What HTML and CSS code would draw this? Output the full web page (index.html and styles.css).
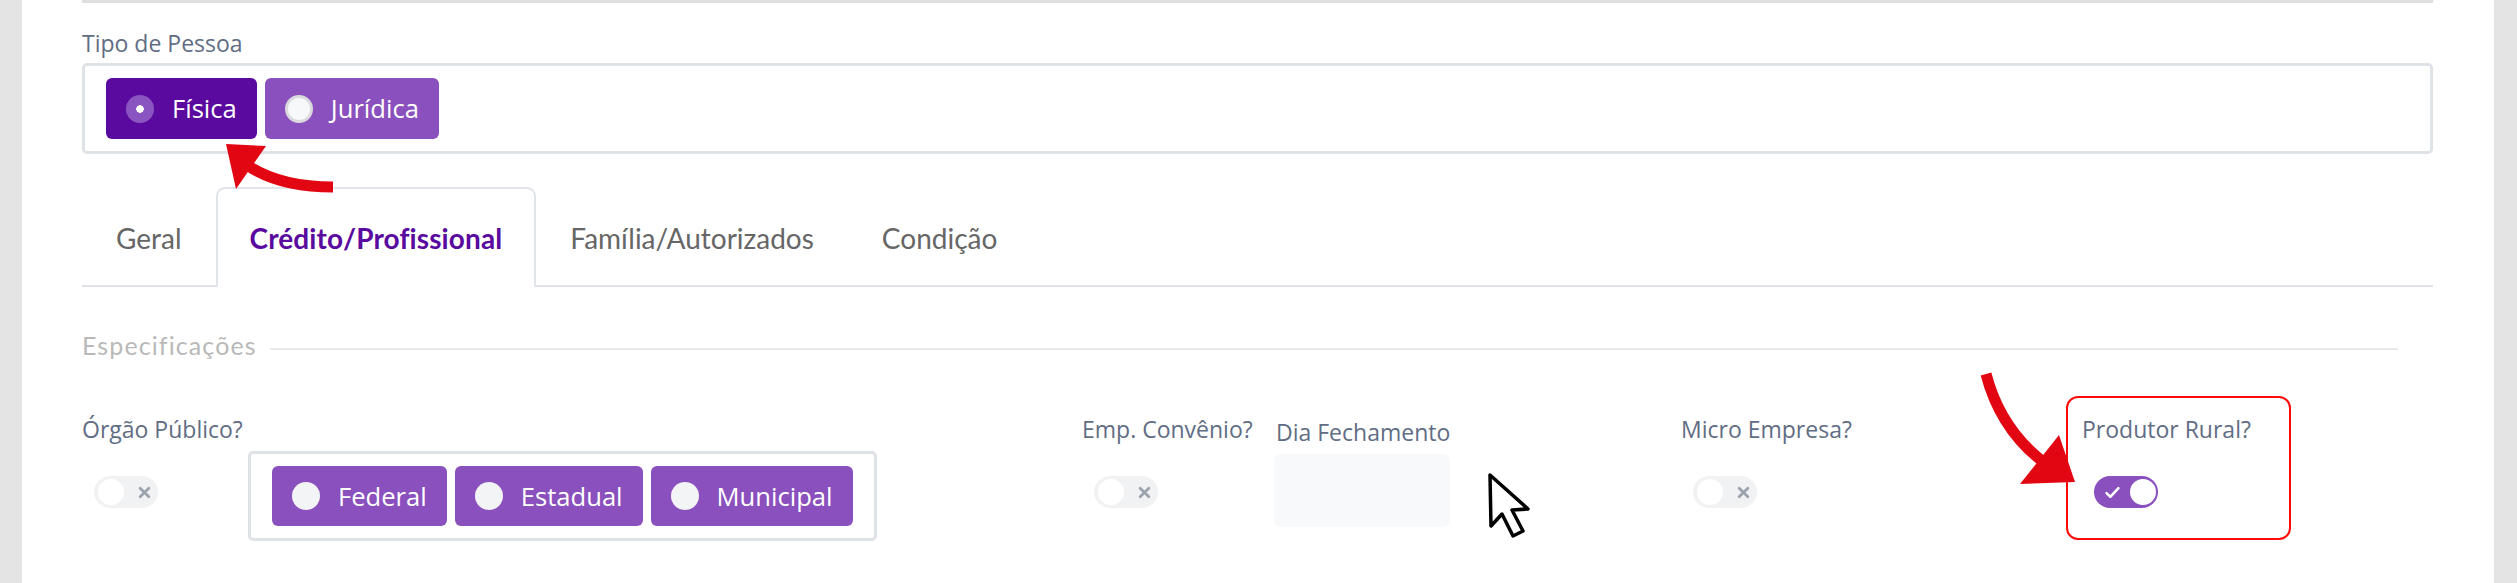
FILE: index.html
```html
<!DOCTYPE html>
<html lang="pt-BR">
<head>
<meta charset="utf-8">
<title>Cadastro de Cliente</title>
<link rel="stylesheet" href="styles.css">
</head>
<body>
<div class="page">
  <div class="topline"></div>

  <section class="pessoa">
    <div class="label">Tipo de Pessoa</div>
    <div class="radio-group">
      <span class="rbtn dark"><span class="dot checked"></span>Física</span>
      <span class="rbtn"><span class="dot ring"></span>Jurídica</span>
    </div>
  </section>

  <nav class="tabs">
    <span class="tab">Geral</span>
    <span class="tab active">Crédito/Profissional</span>
    <span class="tab">Família/Autorizados</span>
    <span class="tab">Condição</span>
  </nav>

  <div class="legend"><span class="legend-text">Especificações</span><span class="legend-line"></span></div>

  <div class="fields">
    <div class="field f-orgao">
      <div class="label">Órgão Público?</div>
      <div class="orgao-row">
        <span class="toggle off">
          <span class="knob"></span>
          <svg class="xicon" viewBox="0 0 12 12"><path d="M2 2 L10 10 M10 2 L2 10"/></svg>
        </span>
        <div class="radio-group inline">
          <span class="rbtn"><span class="dot"></span>Federal</span>
          <span class="rbtn"><span class="dot"></span>Estadual</span>
          <span class="rbtn"><span class="dot"></span>Municipal</span>
        </div>
      </div>
    </div>

    <div class="field f-emp">
      <div class="label">Emp. Convênio?</div>
      <span class="toggle off">
        <span class="knob"></span>
        <svg class="xicon" viewBox="0 0 12 12"><path d="M2 2 L10 10 M10 2 L2 10"/></svg>
      </span>
    </div>

    <div class="field f-dia">
      <div class="label">Dia Fechamento</div>
      <div class="input"></div>
    </div>

    <div class="field f-micro">
      <div class="label">Micro Empresa?</div>
      <span class="toggle off">
        <span class="knob"></span>
        <svg class="xicon" viewBox="0 0 12 12"><path d="M2 2 L10 10 M10 2 L2 10"/></svg>
      </span>
    </div>

    <div class="field f-prod">
      <div class="label">Produtor Rural?</div>
      <span class="toggle on">
        <svg class="check" viewBox="0 0 14 12"><path d="M1.5 6.5 L5 10 L12.5 2"/></svg>
        <span class="knob"></span>
      </span>
    </div>
  </div>
</div>

<svg class="overlay" width="2517" height="583" viewBox="0 0 2517 583">
  <g class="arrow">
    <path class="shaft" d="M250 167 Q 282 187 333 187"/>
    <polygon points="226,144 266,146 236,189"/>
  </g>
  <g class="arrow">
    <path class="shaft" d="M1986 374 Q 2000 428 2042 461"/>
    <polygon points="2059,435 2020,484 2075,482"/>
  </g>
  <path class="cursor" d="M1490 475 L1491 526 L1502 514 L1513 536 L1523 531 L1512 510 L1528 509 Z"/>
</svg>
</body>
</html>
```

FILE: styles.css
```css
html, body {
  margin: 0;
  height: 583px;
  overflow: hidden;
}

body {
  background: #e4e4e4;
  font-family: "Open Sans", "Noto Sans", sans-serif;
  position: relative;
}

.page {
  margin: 0 23px 0 22px;
  height: 583px;
  background: #fff;
  padding: 0 61px 0 60px;
}

.topline {
  height: 3px;
  background: #dedede;
}

.label {
  color: #616d84;
  font-size: 23px;
  line-height: 32px;
  white-space: nowrap;
}

.pessoa .label {
  margin-top: 24px;
}

.radio-group {
  display: flex;
  gap: 8px;
  border: 3px solid #dfe2e6;
  border-radius: 5px;
  padding: 12px 21px;
  margin-top: 4px;
}

.rbtn {
  display: flex;
  align-items: center;
  height: 61px;
  padding: 0 20px;
  border-radius: 6px;
  background: #8a50bd;
  color: #fff;
  font-size: 25.6px;
  white-space: nowrap;
}

.rbtn.dark {
  background: #5a0a9e;
}

.dot {
  width: 28px;
  height: 28px;
  border-radius: 50%;
  background: #f3f4f6;
  margin-right: 18px;
  box-sizing: border-box;
  flex: none;
}

.dot.ring {
  border: 3px solid #d9d9de;
  background: #f7f8fa;
}

.dot.checked {
  background: #8a55c0 radial-gradient(circle, #fff 0 3.5px, transparent 4px);
}

/* tabs */
.tabs {
  display: flex;
  margin-top: 33px;
  border-bottom: 2px solid #e0e3e8;
  font-family: "Lato", sans-serif;
  font-size: 28px;
}

.tab {
  display: flex;
  align-items: center;
  height: 98px;
  padding: 0 32px;
  border: 2px solid transparent;
  border-bottom: 0;
  margin-bottom: -2px;
  color: #666;
  white-space: nowrap;
}

.tab.active {
  border-color: #e0e3e8;
  border-radius: 9px 9px 0 0;
  background: #fff;
  color: #5a0a9e;
  font-weight: 700;
  letter-spacing: 0.1px;
}

/* legend */
.legend {
  display: flex;
  align-items: center;
  margin-top: 44px;
  margin-right: 35px;
  font-family: "Lato", sans-serif;
}

.legend-text {
  font-size: 25px;
  line-height: 28px;
  color: #b9b9b9;
  font-weight: 400;
  letter-spacing: 1.1px;
}

.legend-line {
  flex: 1;
  height: 2px;
  margin: 8px 0 0 13px;
  background: #e9e9e9;
}

/* fields */
.fields {
  display: flex;
  align-items: flex-start;
  margin-top: 37px;
}

.field {
  padding-top: 17px;
  flex: none;
}

.f-orgao { width: 1000px; }
.f-emp { width: 192px; }
.f-dia { width: 407px; padding-top: 20px; }
.f-micro { width: 385px; }

.f-prod {
  width: 225px;
  box-sizing: border-box;
  border: 2px solid #ff0a0a;
  border-radius: 12px;
  padding: 15px 14px 30px;
}

.f-dia .label {
  margin-left: 2px;
}

.orgao-row {
  display: flex;
  align-items: flex-start;
  margin-top: 6px;
}

.orgao-row .toggle {
  margin-top: 25px;
}

.radio-group.inline {
  margin: 0 0 0 90px;
  padding: 12px 21px;
}

.radio-group.inline .rbtn {
  height: 60px;
}

.toggle {
  display: flex;
  align-items: center;
  width: 64px;
  height: 32px;
  border-radius: 16px;
  margin: 31px 0 0 12px;
  box-sizing: border-box;
  padding: 0 3px 0 4px;
}

.toggle.off {
  background: #f1f2f4;
}

.toggle.on {
  background: #8a50bd;
  justify-content: space-between;
  padding: 0 2px 0 11px;
}

.knob {
  width: 26px;
  height: 26px;
  border-radius: 50%;
  background: #fff;
  flex: none;
}

.xicon {
  width: 13px;
  height: 13px;
  margin-left: 14px;
  fill: none;
  stroke: #9ca3af;
  stroke-width: 2.6;
  stroke-linecap: round;
}

.check {
  width: 15px;
  height: 13px;
  fill: none;
  stroke: #fff;
  stroke-width: 2.4;
  stroke-linecap: round;
  stroke-linejoin: round;
}

.input {
  margin-top: 6px;
  width: 176px;
  height: 73px;
  border-radius: 7px;
  background: #f8f9fb;
}

/* annotations */
.overlay {
  position: absolute;
  top: 0;
  left: 0;
  pointer-events: none;
}

.arrow {
  fill: #e20613;
}

.shaft {
  fill: none;
  stroke: #e20613;
  stroke-width: 11;
}

.cursor {
  fill: #fff;
  stroke: #000;
  stroke-width: 3.5;
  stroke-linejoin: round;
}
```
